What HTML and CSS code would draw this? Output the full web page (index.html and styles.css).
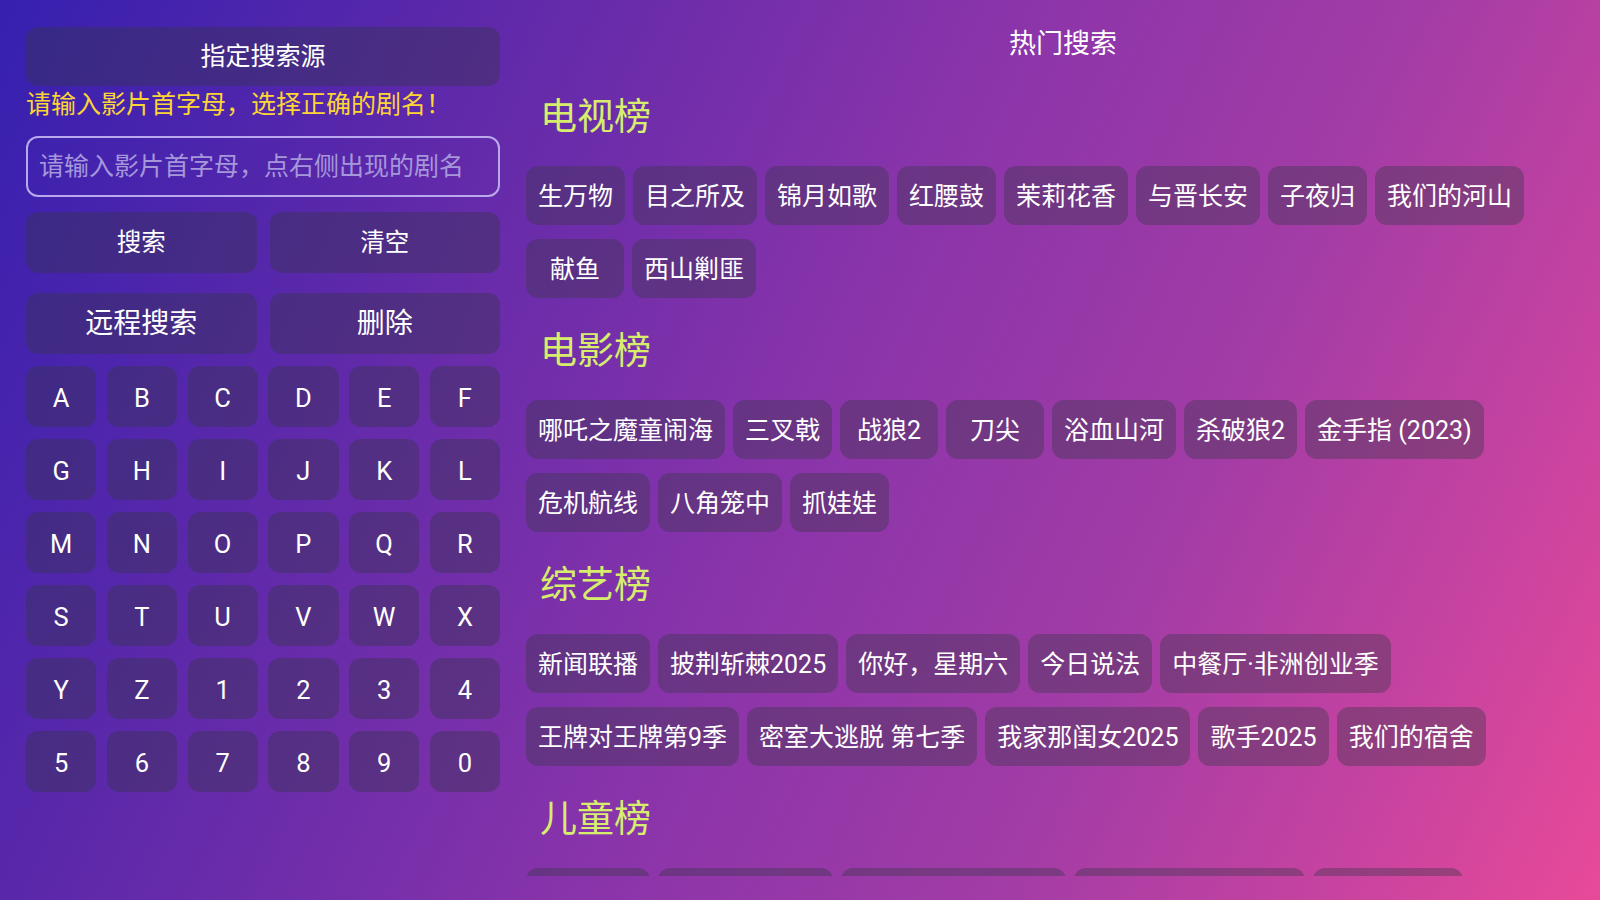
FILE: index.html
```html
<!DOCTYPE html>
<html>
<head lang="zh">
    <meta charset="UTF-8">
    <title>搜索</title>
    <link rel="stylesheet" href="styles.css">
</head>
<body>
<div class="page">
    <div class="search-panel">
        <div class="btn btn-source">指定搜索源</div>
        <div class="search-hint">请输入影片首字母，选择正确的剧名！</div>
        <input type="text" class="search-input" placeholder="请输入影片首字母，点右侧出现的剧名">
        <div class="btn-row">
            <div class="btn">搜索</div>
            <div class="btn">清空</div>
        </div>
        <div class="btn-row btn-row-big">
            <div class="btn">远程搜索</div>
            <div class="btn">删除</div>
        </div>
        <div class="keyboard">
            <div class="key">A</div><div class="key">B</div><div class="key">C</div>
            <div class="key">D</div><div class="key">E</div><div class="key">F</div>
            <div class="key">G</div><div class="key">H</div><div class="key">I</div>
            <div class="key">J</div><div class="key">K</div><div class="key">L</div>
            <div class="key">M</div><div class="key">N</div><div class="key">O</div>
            <div class="key">P</div><div class="key">Q</div><div class="key">R</div>
            <div class="key">S</div><div class="key">T</div><div class="key">U</div>
            <div class="key">V</div><div class="key">W</div><div class="key">X</div>
            <div class="key">Y</div><div class="key">Z</div><div class="key">1</div>
            <div class="key">2</div><div class="key">3</div><div class="key">4</div>
            <div class="key">5</div><div class="key">6</div><div class="key">7</div>
            <div class="key">8</div><div class="key">9</div><div class="key">0</div>
        </div>
    </div>

    <div class="hot">
        <div class="hot-title">热门搜索</div>
        <div class="hot-list">
            <div class="hot-group">
                <div class="group-title">电视榜</div>
                <div class="tags">
                    <span class="tag">生万物</span>
                    <span class="tag">目之所及</span>
                    <span class="tag">锦月如歌</span>
                    <span class="tag">红腰鼓</span>
                    <span class="tag">茉莉花香</span>
                    <span class="tag">与晋长安</span>
                    <span class="tag">子夜归</span>
                    <span class="tag">我们的河山</span>
                    <span class="tag">献鱼</span>
                    <span class="tag">西山剿匪</span>
                </div>
            </div>
            <div class="hot-group">
                <div class="group-title">电影榜</div>
                <div class="tags">
                    <span class="tag">哪吒之魔童闹海</span>
                    <span class="tag">三叉戟</span>
                    <span class="tag">战狼2</span>
                    <span class="tag">刀尖</span>
                    <span class="tag">浴血山河</span>
                    <span class="tag">杀破狼2</span>
                    <span class="tag">金手指 (2023)</span>
                    <span class="tag">危机航线</span>
                    <span class="tag">八角笼中</span>
                    <span class="tag">抓娃娃</span>
                </div>
            </div>
            <div class="hot-group">
                <div class="group-title">综艺榜</div>
                <div class="tags">
                    <span class="tag">新闻联播</span>
                    <span class="tag">披荆斩棘2025</span>
                    <span class="tag">你好，星期六</span>
                    <span class="tag">今日说法</span>
                    <span class="tag">中餐厅·非洲创业季</span>
                    <span class="tag">王牌对王牌第9季</span>
                    <span class="tag">密室大逃脱 第七季</span>
                    <span class="tag">我家那闺女2025</span>
                    <span class="tag">歌手2025</span>
                    <span class="tag">我们的宿舍</span>
                </div>
            </div>
            <div class="hot-group">
                <div class="group-title">儿童榜</div>
                <!-- 下面一行只露出顶边 -->
                <div class="tags">
                    <span class="tag tag-w1"></span>
                    <span class="tag tag-w2"></span>
                    <span class="tag tag-w3"></span>
                    <span class="tag tag-w4"></span>
                    <span class="tag tag-w5"></span>
                </div>
            </div>
        </div>
    </div>
</div>
</body>
</html>
```

FILE: styles.css
```css
html, body {
    margin: 0px;
    padding: 0px;
    height: 100%;
}
body {
    font-family: Roboto, "Noto Sans CJK SC", sans-serif;
    color: #ffffff;
    background: linear-gradient(115deg, #3620b0 0%, #5a28aa 22%, #8a34aa 50%, #a23ca6 70%, #c843a0 87%, #e84a98 100%);
    overflow: hidden;
}
.page {
    height: 100%;
    box-sizing: border-box;
    padding: 24px 0px 24px 26px;
    display: grid;
    grid-template-columns: 474px 1fr;
    column-gap: 26px;
}

/* 左侧搜索面板 */
.search-panel {
    padding-top: 3px;
    display: flex;
    flex-direction: column;
}
.btn {
    height: 61px;
    line-height: 61px;
    text-align: center;
    font-size: 24.5px;
    background: rgba(55, 52, 78, 0.42);
    border-radius: 12px;
}
.btn-source {
    height: 59px;
    line-height: 59px;
    font-size: 25px;
}
.search-hint {
    height: 38px;
    line-height: 38px;
    font-size: 25px;
    color: #fcd535;
}
.search-input {
    margin-top: 12px;
    height: 61px;
    box-sizing: border-box;
    border: 2.5px solid #b9a9ec;
    border-radius: 12px;
    background: transparent;
    padding: 0px 11px;
    font-family: Roboto, "Noto Sans CJK SC", sans-serif;
    font-size: 25px;
    color: #ffffff;
    outline: none;
}
.search-input::placeholder {
    color: #a697db;
}
.btn-row {
    margin-top: 15px;
    display: grid;
    grid-template-columns: 1fr 1fr;
    column-gap: 13px;
}
.btn-row-big {
    margin-top: 20px;
}
.btn-row-big .btn {
    font-size: 28px;
}
.keyboard {
    margin-top: 12px;
    display: grid;
    grid-template-columns: repeat(6, 1fr);
    column-gap: 10.5px;
    row-gap: 12px;
}
.key {
    box-sizing: border-box;
    height: 61px;
    padding-top: 3px;
    line-height: 58px;
    text-align: center;
    font-size: 25.5px;
    background: rgba(55, 52, 78, 0.42);
    border-radius: 12px;
}

/* 右侧热门搜索 */
.hot {
    display: flex;
    flex-direction: column;
    min-height: 0px;
}
.hot-title {
    height: 40px;
    line-height: 40px;
    text-align: center;
    font-size: 27px;
}
.hot-list {
    margin-top: 29px;
    flex: 1;
    overflow: hidden;
    padding-right: 52px;
}
.hot-group {
    margin-bottom: 29px;
}
.group-title {
    height: 50px;
    line-height: 50px;
    padding-left: 14px;
    font-size: 37px;
    color: #d6ee6c;
}
.tags {
    margin-top: 23px;
    display: flex;
    flex-wrap: wrap;
    column-gap: 8px;
    row-gap: 14px;
}
.tag {
    box-sizing: border-box;
    min-width: 98px;
    height: 59px;
    padding: 3px 12px 0px 12px;
    line-height: 56px;
    font-size: 25px;
    text-align: center;
    background: rgba(55, 55, 70, 0.38);
    border-radius: 12px;
    white-space: nowrap;
}
.tag-w1 {
    width: 124px;
}
.tag-w2 {
    width: 175px;
}
.tag-w3 {
    width: 225px;
}
.tag-w4 {
    width: 231px;
}
.tag-w5 {
    width: 150px;
}
```
